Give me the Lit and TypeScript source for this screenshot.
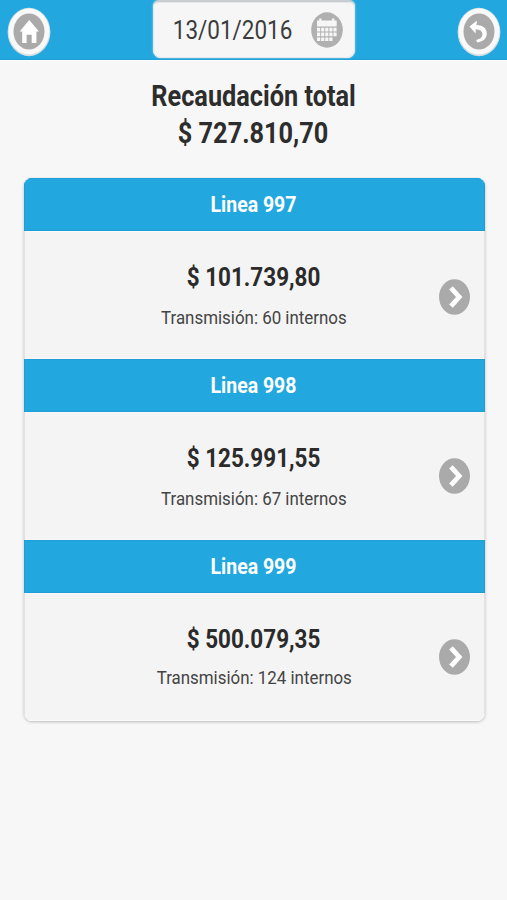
import { LitElement, html, css } from "lit";
import { customElement, property } from "lit/decorators.js";

interface Line {
  name: string;
  amount: string;
  detail: string;
}

const LINES: Line[] = [
  { name: "Linea 997", amount: "$ 101.739,80", detail: "Transmisión: 60 internos" },
  { name: "Linea 998", amount: "$ 125.991,55", detail: "Transmisión: 67 internos" },
  { name: "Linea 999", amount: "$ 500.079,35", detail: "Transmisión: 124 internos" },
];

@customElement("line-item")
export class LineItem extends LitElement {
  @property({ attribute: false }) line!: Line;

  static styles = css`
    :host {
      display: block;
    }
    .bar {
      box-sizing: border-box;
      height: 53px;
      border: 1px solid #209cd6;
      background: #22a8df;
      color: #fff;
      font-size: 22px;
      font-weight: 700;
      line-height: 51px;
      text-align: center;
    }
    .narrow {
      display: inline-block;
      transform: scaleX(0.885);
      white-space: nowrap;
    }
    .body {
      box-sizing: border-box;
      height: 128px;
      border: solid #e2e2e2;
      border-width: 0 1px;
      display: grid;
      grid-template-columns: 45px 1fr 45px;
      background: #f4f4f4;
      box-shadow: inset 0 1px #fafafa, inset 0 -1px #fafafa;
    }
    .texts {
      grid-column: 2;
      padding-top: 30px;
      text-align: center;
    }
    .amount {
      font-size: 25.4px;
      font-weight: 700;
      line-height: 32px;
      color: #2b2b2b;
    }
    .detail {
      margin-top: 9px;
      font-size: 19.1px;
      line-height: 32px;
      color: #444;
    }
    .arrow {
      display: block;
      width: 31px;
      height: 36px;
      margin-top: 46px;
    }
    :host(:first-child) .arrow {
      margin-top: 48px;
    }
    :host(:last-child) .detail {
      margin-top: 7px;
    }
  `;

  render() {
    return html`
      <div class="bar"><span class="narrow">${this.line.name}</span></div>
      <div class="body">
        <div class="texts">
          <div class="amount"><span class="narrow">${this.line.amount}</span></div>
          <div class="detail"><span class="narrow">${this.line.detail}</span></div>
        </div>
        <svg class="arrow" viewBox="0 0 31 36">
          <ellipse cx="15.5" cy="18" rx="15.5" ry="17.8" fill="#aaa" />
          <path d="M12 8.8 L20.2 18 L12 27.2" fill="none" stroke="#fff" stroke-width="4.8" />
        </svg>
      </div>
    `;
  }
}

@customElement("app-root")
export class AppRoot extends LitElement {
  static styles = css`
    :host {
      display: block;
      height: 900px;
      overflow: hidden;
      background: #f7f7f7;
      font-family: Roboto, sans-serif;
    }
    .header {
      box-sizing: border-box;
      height: 60px;
      padding: 0 6px 0 7px;
      display: flex;
      justify-content: space-between;
      align-items: flex-start;
      background: #22a8df;
      border-bottom: 1px solid #209cd6;
      box-shadow: 0 1px #fff;
    }
    .round {
      display: block;
      width: 44px;
      height: 50px;
      margin-top: 7px;
    }
    .date {
      box-sizing: border-box;
      width: 202px;
      height: 58px;
      padding: 0 12px 0 12px;
      display: flex;
      align-items: center;
      justify-content: space-between;
      border-radius: 6px 6px 8px 8px;
      background: #f6f6f6;
      border-top: 2px solid #c9cdcf;
      box-shadow: inset 0 0 0 1px #e3e7ea, 0 0 2px #c0dce8;
    }
    .narrow {
      display: inline-block;
      transform: scaleX(0.885);
      white-space: nowrap;
    }
    .day {
      font-size: 25.4px;
      color: #3c3c3c;
    }
    .calendar {
      display: block;
      width: 32px;
      height: 36px;
    }
    .total {
      margin: 18px 0 26px;
      text-align: center;
      font-size: 28.6px;
      font-weight: 700;
      line-height: 37px;
      color: #2d2d2d;
    }
    .list {
      margin: 0 22.5px 0 23.5px;
      overflow: hidden;
      border-radius: 8px;
      box-shadow: 0 1px 3px rgba(0, 0, 0, 0.25);
    }
  `;

  render() {
    return html`
      <div class="header">
        <svg class="round" viewBox="0 0 44 50">
          <ellipse cx="22" cy="25" rx="21.4" ry="24.2" fill="#d5dde1" />
          <ellipse cx="22" cy="24.5" rx="20.4" ry="23" fill="#f9f9f9" />
          <ellipse cx="22" cy="24.5" rx="15.5" ry="18" fill="#aaa" />
          <path d="M22.2 13 L32 24.6 H29.4 V36 H24.7 V27.8 H19.6 V36 H15.2 V24.6 H12.7 Z" fill="#fff" />
        </svg>
        <div class="date">
          <span class="day narrow">13/01/2016</span>
          <svg class="calendar" viewBox="0 0 32 36">
            <ellipse cx="16" cy="18" rx="15.8" ry="17.7" fill="#b0b0b0" />
            <path d="M6 8.5 H8.2 V6.5 H10.5 V8.5 H21 V6.5 H23.3 V8.5 H25.7 V14.5 H6 Z" fill="#f6f6f6" />
            <path d="M6 15.8h3.2v3.7H6zM10.1 15.8h3.2v3.7h-3.2zM14.2 15.8h3.2v3.7h-3.2zM18.3 15.8h3.2v3.7h-3.2zM22.4 15.8h3.2v3.7h-3.2zM6 20.6h3.2v3.7H6zM10.1 20.6h3.2v3.7h-3.2zM14.2 20.6h3.2v3.7h-3.2zM18.3 20.6h3.2v3.7h-3.2zM22.4 20.6h3.2v3.7h-3.2zM6 25.4h3.2v3.7H6zM10.1 25.4h3.2v3.7h-3.2zM14.2 25.4h3.2v3.7h-3.2zM18.3 25.4h3.2v3.7h-3.2z" fill="#f6f6f6" />
          </svg>
        </div>
        <svg class="round" viewBox="0 0 44 50">
          <ellipse cx="22" cy="25" rx="21.4" ry="24.2" fill="#d5dde1" />
          <ellipse cx="22" cy="24.5" rx="20.4" ry="23" fill="#f9f9f9" />
          <ellipse cx="22" cy="24.5" rx="15.5" ry="18" fill="#aaa" />
          <path d="M12.5 19.6 L20 13.6 L19.4 18 C26.4 18.2 29.8 21.8 29.8 26.6 C29.8 31.4 26.4 34.6 20.4 35.4 L19 33 C23.6 32 25.6 30 25.4 27 C25.2 24 23 22.4 18.8 22.2 L18.6 26.4 Z" fill="#fff" />
        </svg>
      </div>
      <div class="total">
        <div><span class="narrow">Recaudación total</span></div>
        <div><span class="narrow">$ 727.810,70</span></div>
      </div>
      <div class="list">
        ${LINES.map((line) => html`<line-item .line=${line}></line-item>`)}
      </div>
    `;
  }
}
